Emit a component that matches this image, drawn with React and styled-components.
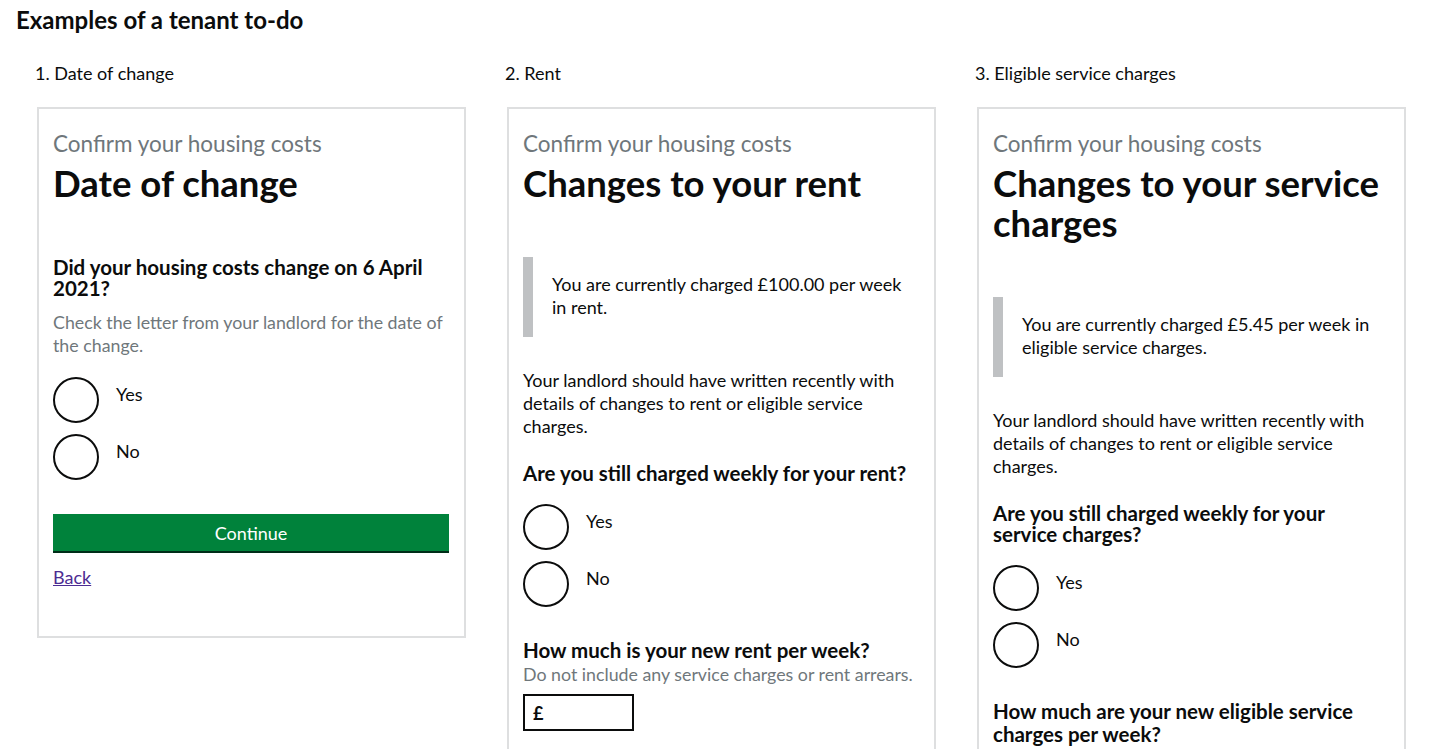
import React from 'react'
import styled, { createGlobalStyle } from 'styled-components'

const colors = {
    text: '#0b0c0c',
    secondary: '#6f777b',
    border: '#dedfe0',
    inset: '#bfc1c3',
    green: '#00823b',
    greenShadow: '#002d18',
    link: '#4c2c92',
}

const GlobalStyle = createGlobalStyle`
body {
    margin: 0;
    background: white;
    color: ${colors.text};
    font-family: Lato, "Liberation Sans", Arial, sans-serif;
}
`

const Page = styled.div`
padding: 8px 16px;
`

const PageTitle = styled.h2`
margin: 0;
font-size: 24px;
line-height: 24px;
font-weight: 700;
`

const Columns = styled.div`
display: grid;
grid-template-columns: repeat(3, 429px);
column-gap: 41px;
align-items: start;
margin: 30px 0 0 21px;
`

const Column = styled.div`
display: flex;
flex-direction: column;
`

const StepLabel = styled.div`
font-size: 18px;
line-height: 23px;
margin-left: -2px;
`

const Card = styled.div`
margin-top: 22px;
border: 2px solid ${colors.border};
padding: 22px 15px 47px 14px;
display: flex;
flex-direction: column;
align-items: stretch;
`

const Caption = styled.span`
font-size: 22.5px;
line-height: 25px;
color: ${colors.secondary};
`

const Heading = styled.h1`
margin: 7px 0 0;
font-size: 36.5px;
line-height: 40px;
font-weight: 700;
`

const Inset = styled.div`
margin-top: 54px;
border-left: 10px solid ${colors.inset};
padding: 16px 0 18px 19px;
font-size: 18px;
line-height: 23px;
`

const Body = styled.p`
margin: ${props => props.$top || 0}px 0 0;
font-size: 18px;
line-height: 23px;
`

const Question = styled.h3`
margin: ${props => props.$top || 0}px 0 0;
font-size: 20.5px;
line-height: ${props => props.$line || 21}px;
font-weight: 700;
`

const Hint = styled.div`
margin-top: ${props => props.$top || 0}px;
font-size: 17.8px;
line-height: 23px;
color: ${colors.secondary};
`

const Radios = styled.div`
margin-top: 20px;
display: flex;
flex-direction: column;
gap: 11px;
`

const RadioRow = styled.label`
display: flex;
align-items: flex-start;
gap: 17px;
`

const RadioCircle = styled.span`
width: 42px;
height: 42px;
border: 2px solid ${colors.text};
border-radius: 50%;
flex-shrink: 0;
`

const RadioText = styled.span`
font-size: 18px;
line-height: 23px;
padding-top: 6px;
`

const Button = styled.button`
margin-top: 34px;
height: 37px;
border: none;
background: ${colors.green};
box-shadow: 0 2px 0 ${colors.greenShadow};
color: white;
font-family: inherit;
font-size: 18px;
`

const BackLink = styled.a`
margin-top: 15px;
align-self: flex-start;
color: ${colors.link};
text-decoration: underline;
font-size: 18px;
line-height: 23px;
`

const MoneyInput = styled.div`
margin-top: 8px;
height: 33px;
width: 99px;
border: 2px solid ${colors.text};
display: flex;
align-items: center;
padding-left: 8px;
font-weight: 700;
font-size: 18px;
`

function YesNo() {
    return (
        <Radios>
            <RadioRow><RadioCircle /><RadioText>Yes</RadioText></RadioRow>
            <RadioRow><RadioCircle /><RadioText>No</RadioText></RadioRow>
        </Radios>
    )
}

function App() {
    return (
        <Page>
            <GlobalStyle />
            <PageTitle>Examples of a tenant to-do</PageTitle>
            <Columns>
                <Column>
                    <StepLabel>1. Date of change</StepLabel>
                    <Card>
                        <Caption>Confirm your housing costs</Caption>
                        <Heading>Date of change</Heading>
                        <Question $top={54}>Did your housing costs change on 6 April 2021?</Question>
                        <Hint $top={12}>Check the letter from your landlord for the date of the change.</Hint>
                        <YesNo />
                        <Button>Continue</Button>
                        <BackLink href="#">Back</BackLink>
                    </Card>
                </Column>
                <Column>
                    <StepLabel>2. Rent</StepLabel>
                    <Card>
                        <Caption>Confirm your housing costs</Caption>
                        <Heading>Changes to your rent</Heading>
                        <Inset>You are currently charged £100.00 per week in rent.</Inset>
                        <Body $top={32}>Your landlord should have written recently with details of changes to rent or eligible service charges.</Body>
                        <Question $top={25}>Are you still charged weekly for your rent?</Question>
                        <YesNo />
                        <Question $top={33}>How much is your new rent per week?</Question>
                        <Hint $top={2}>Do not include any service charges or rent arrears.</Hint>
                        <MoneyInput>£</MoneyInput>
                    </Card>
                </Column>
                <Column>
                    <StepLabel>3. Eligible service charges</StepLabel>
                    <Card>
                        <Caption>Confirm your housing costs</Caption>
                        <Heading>Changes to your service charges</Heading>
                        <Inset>You are currently charged £5.45 per week in eligible service charges.</Inset>
                        <Body $top={32}>Your landlord should have written recently with details of changes to rent or eligible service charges.</Body>
                        <Question $top={25}>Are you still charged weekly for your service charges?</Question>
                        <YesNo />
                        <Question $top={32} $line={23}>How much are your new eligible service charges per week?</Question>
                    </Card>
                </Column>
            </Columns>
        </Page>
    )
}

export default App
